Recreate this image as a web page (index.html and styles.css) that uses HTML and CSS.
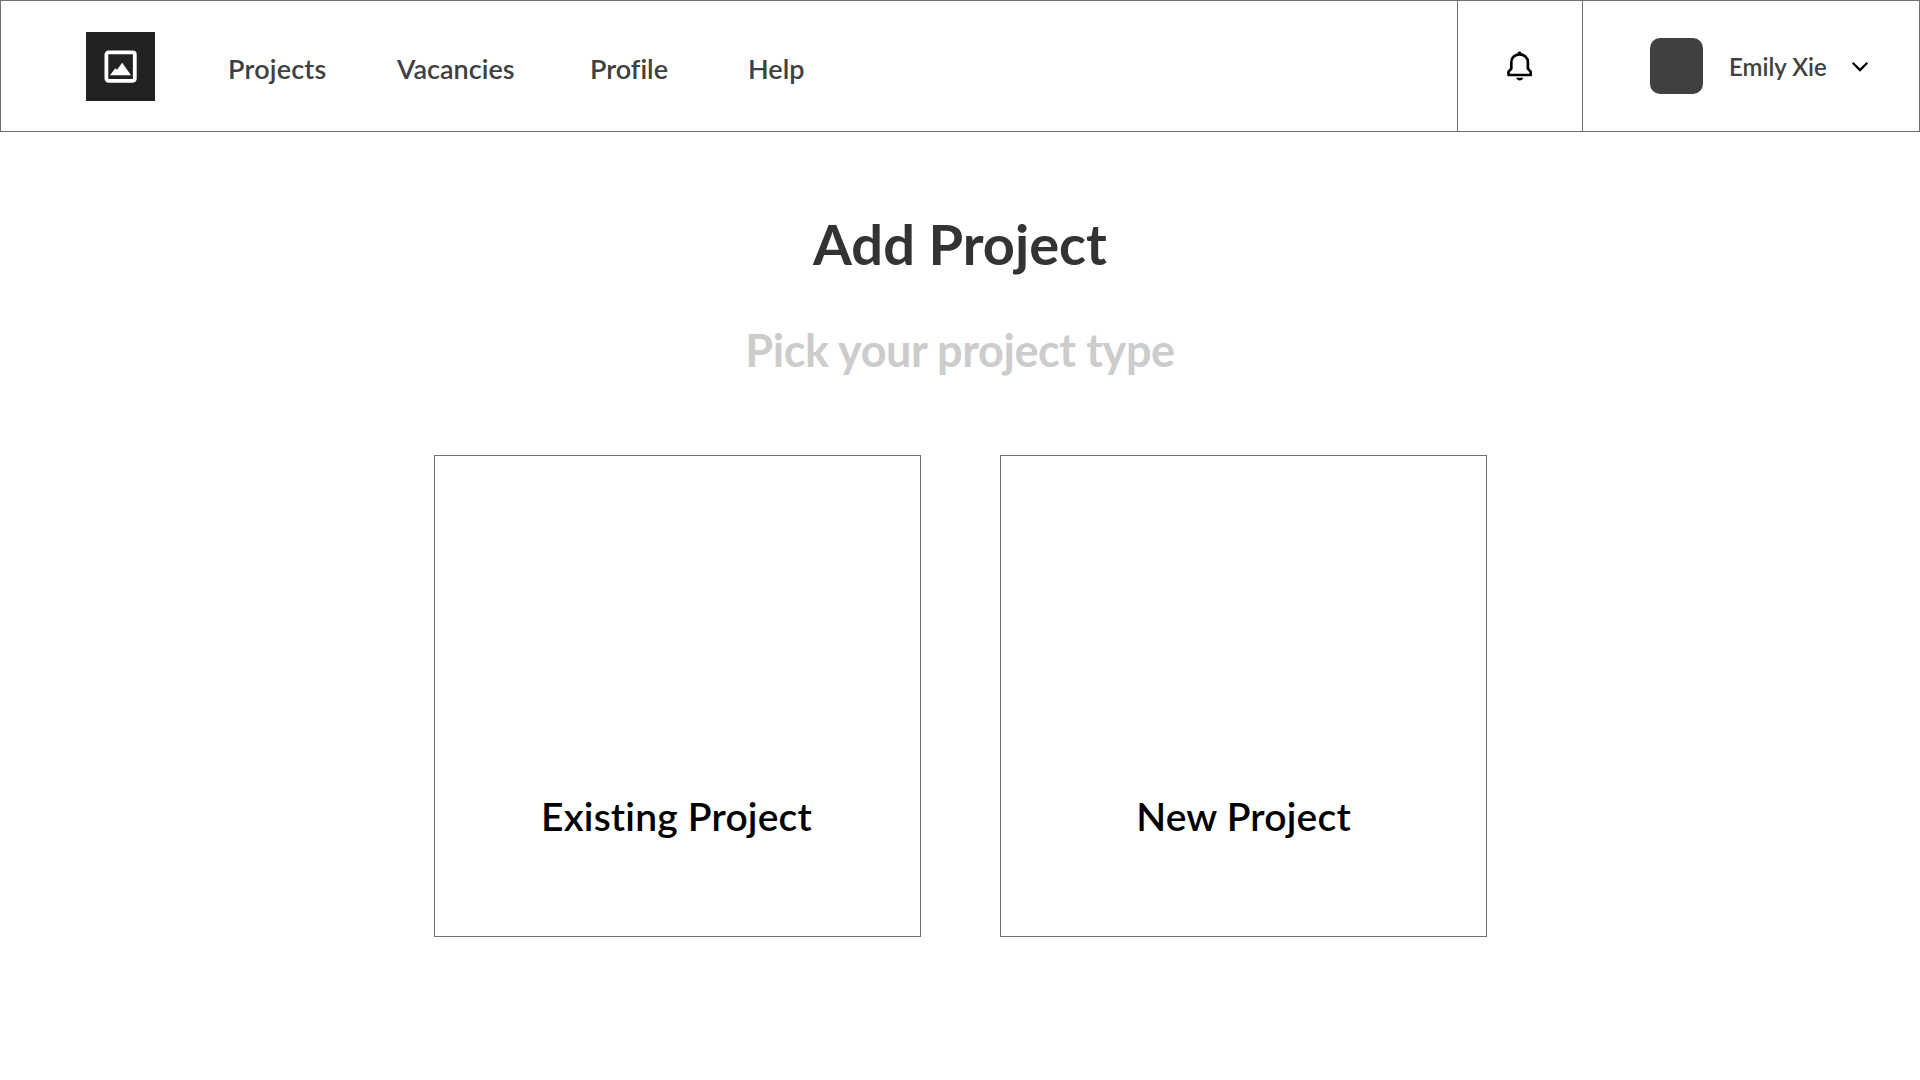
FILE: index.html
```html
<!DOCTYPE html>
<html lang="en">
<head>
<meta charset="utf-8">
<title>Add Project</title>
<link rel="stylesheet" href="styles.css">
</head>
<body>
<header class="topbar">
  <a class="logo" aria-label="Home">
    <svg width="33" height="33" viewBox="0 0 33 33">
      <rect x="2.4" y="2.4" width="28.4" height="28.4" rx="2.2" fill="none" stroke="#fff" stroke-width="3.8"/>
      <path d="M6 25.2 11.3 18.2 13 19.8 18.2 12.8 27 25.2Z" fill="#fff"/>
    </svg>
  </a>
  <nav class="nav">
    <a class="nav-projects">Projects</a>
    <a class="nav-vacancies">Vacancies</a>
    <a class="nav-profile">Profile</a>
    <a class="nav-help">Help</a>
  </nav>
  <div class="alerts">
    <svg width="28" height="30" viewBox="0 0 28 30">
      <path d="M2.5 24V20.8L5.3 17.6V11.2C5.3 6.5 9 3.3 13.5 3.3S21.9 6.5 21.9 11.2V17.6L24.7 20.8V24Z" fill="none" stroke="#000" stroke-width="2.7" stroke-linejoin="round"/>
      <path d="M11.4 2.5a2.1 2.1 0 0 1 4.2 0Z" fill="#000"/>
      <path d="M10 26.7H17.5Q16 29.5 13.7 29.5T10 26.7Z" fill="#000"/>
    </svg>
  </div>
  <div class="account">
    <span class="avatar"></span>
    <span class="user">Emily Xie</span>
    <svg class="chevron" width="18" height="12" viewBox="0 0 18 12">
      <path d="M1.7 1.8 9 9.1 16.3 1.8" fill="none" stroke="#000" stroke-width="2.2"/>
    </svg>
  </div>
</header>
<main class="content">
  <h1 class="title">Add Project</h1>
  <p class="subtitle">Pick your project type</p>
  <div class="choices">
    <a class="choice existing">Existing Project</a>
    <a class="choice new">New Project</a>
  </div>
</main>
</body>
</html>
```
FILE: styles.css
```css
* { box-sizing: border-box; }
body {
  margin: 0;
  min-height: 1080px;
  background: #fff;
  color: #404040;
  font-family: Lato, "Open Sans", sans-serif;
  font-weight: 600;
  font-variant-ligatures: none;
}
.topbar {
  display: flex;
  align-items: center;
  height: 132px;
  padding-left: 85px;
  border: 1px solid #707070;
}
.logo {
  display: flex;
  align-items: center;
  justify-content: center;
  width: 69px;
  height: 69px;
  background: #222;
}
.nav {
  display: flex;
  flex: 1;
  padding: 6px 0 0 73px;
  font-size: 27px;
  line-height: 32px;
}
.nav-projects { width: 169px; letter-spacing: 0.2px; }
.nav-vacancies { width: 193px; }
.nav-profile { width: 158px; }
.alerts, .account {
  display: flex;
  align-items: center;
  height: 100%;
  border-left: 1px solid #707070;
}
.alerts { width: 125px; padding-left: 48px; }
.account { width: 337px; padding-left: 67px; }
.avatar {
  width: 53px;
  height: 56px;
  border-radius: 10px;
  background: #404040;
}
.user {
  width: 122px;
  margin: 1px 0 0 26px;
  font-size: 24px;
  line-height: 30px;
}
.chevron { margin-top: 2px; }
.content {
  display: flex;
  flex-direction: column;
  align-items: center;
  padding-top: 82px;
}
.title {
  margin: 0 0 49px;
  color: #333;
  font-size: 56px;
  font-weight: 700;
  line-height: 60px;
}
.subtitle {
  margin: 0 0 78px;
  color: #ccc;
  font-size: 45px;
  font-weight: 700;
  line-height: 54px;
  letter-spacing: -0.4px;
}
.choices {
  display: flex;
  gap: 79px;
  padding-left: 1px;
}
.choice {
  display: flex;
  align-items: flex-end;
  justify-content: center;
  width: 487px;
  height: 482px;
  padding-bottom: 96px;
  border: 1px solid #707070;
  color: #000;
  font-size: 39px;
  line-height: 48px;
  letter-spacing: 0.2px;
}
.existing { padding-right: 2px; }
```
